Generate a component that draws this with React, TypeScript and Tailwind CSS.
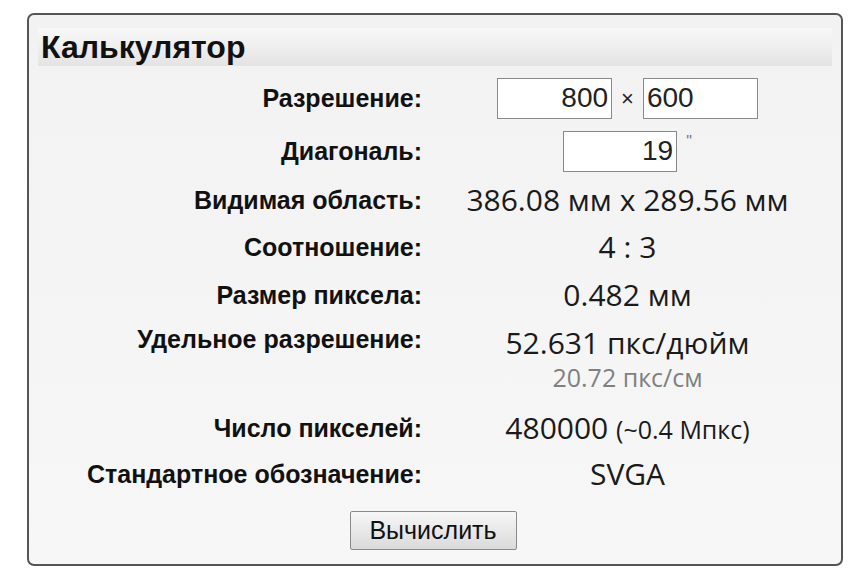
function Label({ children }: { children: React.ReactNode }) {
  return (
    <div className="text-right text-[25px] font-bold text-[#111] font-['Liberation_Sans',Arial,sans-serif] leading-none">
      {children}
    </div>
  );
}

function Value({ children }: { children: React.ReactNode }) {
  return (
    <div className="text-center text-[30px] text-[#1a1a1a] font-['Open_Sans',sans-serif] leading-none">
      {children}
    </div>
  );
}

function Row({ h, label, children }: { h: string; label: string; children: React.ReactNode }) {
  return (
    <div className={`grid grid-cols-[384px_1fr] gap-x-[1px] items-center ${h}`}>
      <Label>{label}</Label>
      {children}
    </div>
  );
}

export default function App() {
  return (
    <div className="w-[858px] h-[574px] bg-white pt-[13px] pl-[27px]">
      <div className="w-[816px] h-[553px] rounded-[7px] border-2 border-[#555] bg-gradient-to-b from-[#f2f2f2] to-[#f7f7f7] px-[9px] pt-[13px]">
        <div className="h-[38px] bg-gradient-to-b from-[#f8f8f8] to-[#e4e4e4] px-[3px] flex items-center">
          <span className="text-[32px] font-bold text-[#111] font-['Liberation_Sans',Arial,sans-serif] leading-none">
            Калькулятор
          </span>
        </div>

        <div className="flex flex-col mt-[11px]">
          <Row h="h-[42px]" label="Разрешение:">
            <div className="flex items-center justify-center gap-[7px] font-['Liberation_Sans',Arial,sans-serif] text-[28px] text-[#222]">
              <div className="w-[115px] h-[41px] border border-[#8a8a8a] bg-white flex items-center justify-end pr-[3px]">800</div>
              <span className="text-[22px] px-[2px]">×</span>
              <div className="w-[115px] h-[41px] border border-[#8a8a8a] bg-white flex items-center pl-[3px]">600</div>
            </div>
          </Row>

          <Row h="h-[64px]" label="Диагональ:">
            <div className="flex items-center justify-center font-['Liberation_Sans',Arial,sans-serif] text-[28px] text-[#222]">
              <div className="w-[114px] h-[41px] border border-[#8a8a8a] bg-white flex items-center justify-end pr-[3px]">19</div>
              <span className="self-start text-[16px] text-[#777] ml-[9px] mt-[3px] leading-none">"</span>
            </div>
          </Row>

          <Row h="h-[34px]" label="Видимая область:">
            <Value>386.08 мм х 289.56 мм</Value>
          </Row>

          <Row h="h-[60px]" label="Соотношение:">
            <Value>4 : 3</Value>
          </Row>

          <Row h="h-[36px]" label="Размер пиксела:">
            <Value>0.482 мм</Value>
          </Row>

          <div className="grid grid-cols-[384px_1fr] gap-x-[1px] h-[87px]">
            <div className="mt-[14px]">
              <Label>Удельное разрешение:</Label>
            </div>
            <div className="flex flex-col items-center">
              <div className="mt-[15px]">
                <Value>52.631 пкс/дюйм</Value>
              </div>
              <div className="text-[25px] text-[#808080] font-['Open_Sans',sans-serif] mt-[7px] leading-none">
                20.72 пкс/см
              </div>
            </div>
          </div>

          <Row h="h-[56px]" label="Число пикселей:">
            <Value>
              480000 <span className="text-[25px]">(~0.4 Мпкс)</span>
            </Value>
          </Row>

          <Row h="h-[36px]" label="Стандартное обозначение:">
            <Value>SVGA</Value>
          </Row>
        </div>

        <div className="flex justify-center mt-[19px] pr-[4px]">
          <button className="w-[167px] h-[39px] border border-[#8a8a8a] rounded-[2px] bg-gradient-to-b from-[#f7f7f7] to-[#dadada] text-[25px] text-[#111] font-['Liberation_Sans',Arial,sans-serif] leading-none">
            Вычислить
          </button>
        </div>
      </div>
    </div>
  );
}
